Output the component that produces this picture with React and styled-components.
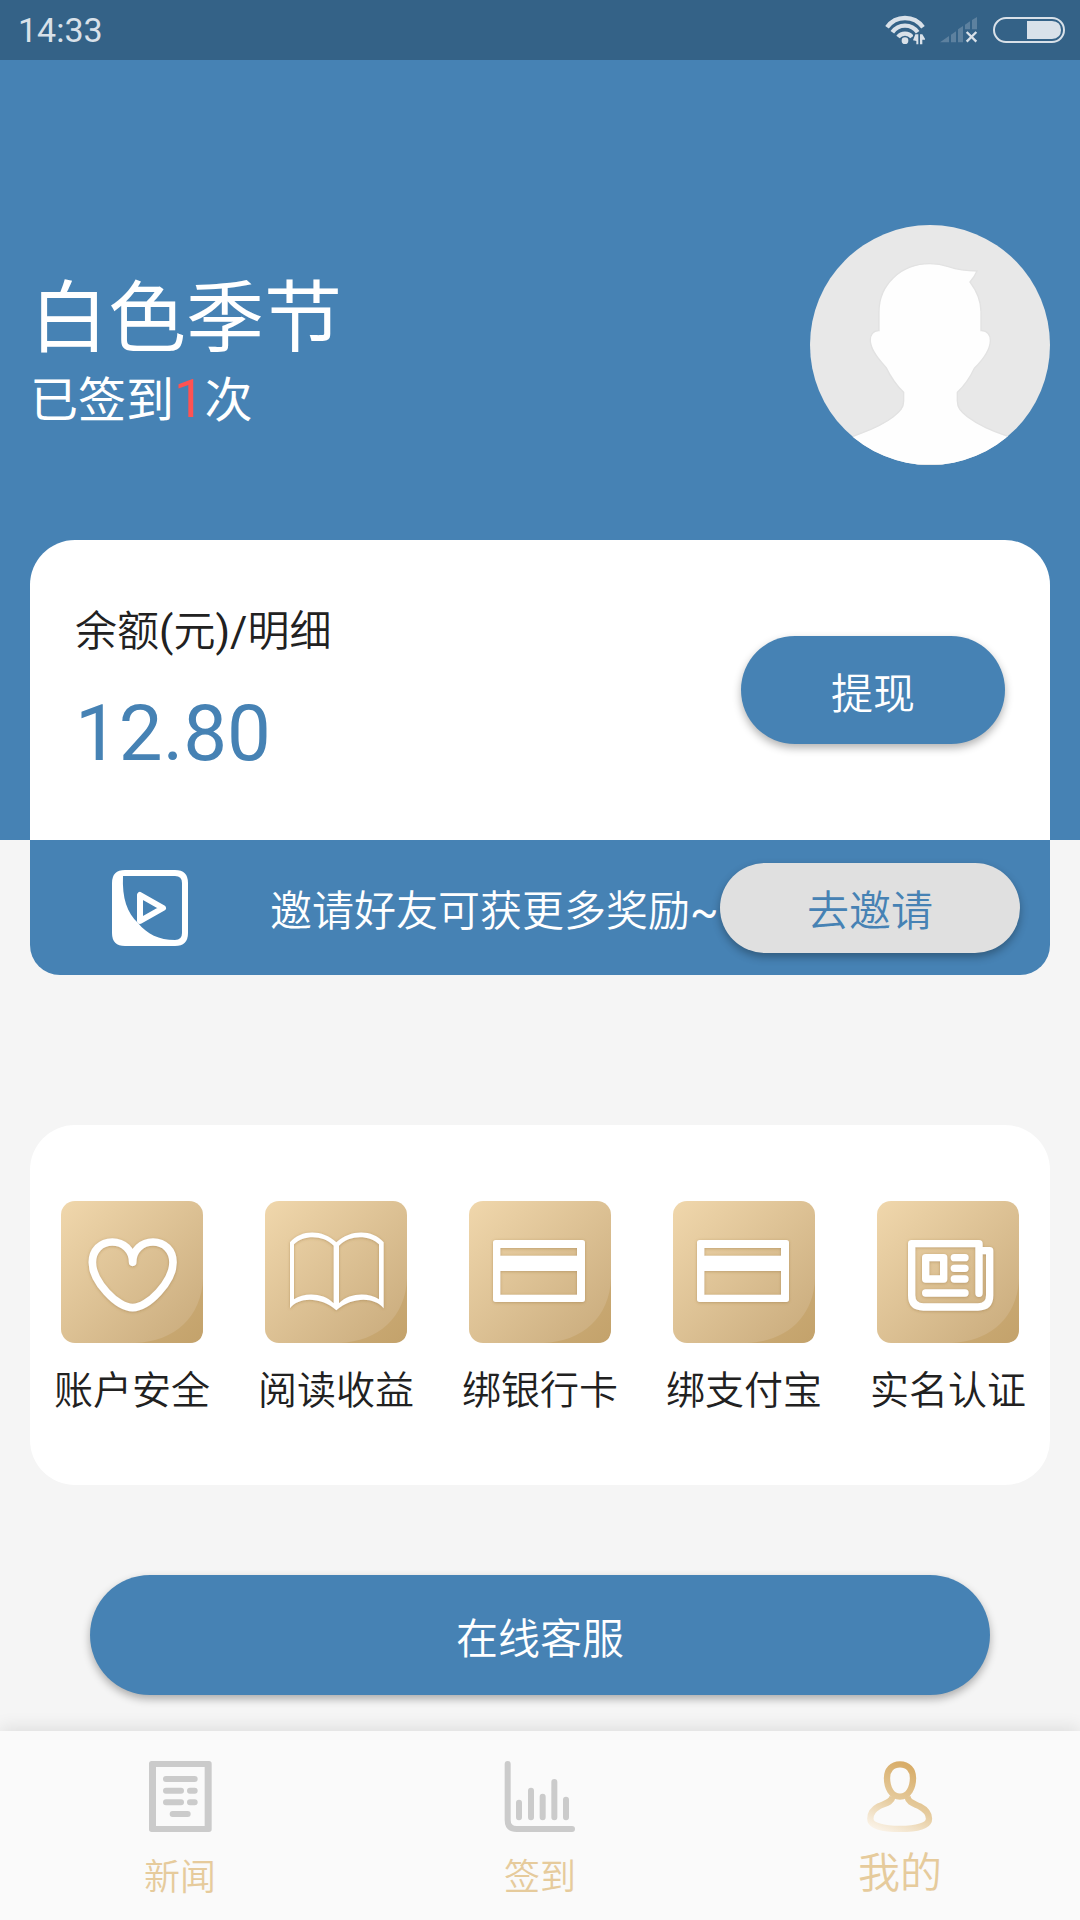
import React from 'react';
import styled, { createGlobalStyle } from 'styled-components';

const blue = '#4682b4';
const gold = '#e6cb9c';

const GlobalStyle = createGlobalStyle`
  *, *::before, *::after { box-sizing: border-box; }
  body {
    margin: 0;
    background: #f5f5f5;
    color: #212121;
    font-family: Roboto, "Noto Sans CJK SC", sans-serif;
    font-weight: 350;
  }
  button { font: inherit; border: 0; cursor: pointer; }
  a { color: inherit; text-decoration: none; }
  svg { display: block; flex: none; }
`;

const Page = styled.div`
  min-height: 100vh;
  display: flex;
  flex-direction: column;
`;

const StatusBar = styled.div`
  height: 60px;
  padding: 0 15px 0 18px;
  display: flex;
  align-items: center;
  justify-content: space-between;
  background: #346287;
  color: #d9e1e9;
  font-size: 34px;
  font-weight: 400;
`;

const StatusIcons = styled.div`
  display: flex;
  align-items: center;
  gap: 15px;
`;

const Hero = styled.header`
  background: ${blue};
`;

const Profile = styled.section`
  display: flex;
  align-items: center;
  justify-content: space-between;
  padding: 165px 30px 75px;
  color: #fff;
`;

const Name = styled.h1`
  margin: 0;
  font-size: 78px;
  line-height: 110px;
  font-weight: 400;
`;

const CheckIns = styled.p`
  margin: 0;
  font-size: 48px;
  line-height: 48px;
  font-weight: 400;
`;

const Count = styled.span`
  color: #ff5252;
  font-size: 54px;
`;

const BalanceCard = styled.section`
  margin: 0 30px;
  padding: 48px 45px;
  display: flex;
  align-items: center;
  justify-content: space-between;
  border-radius: 45px 45px 0 0;
  background: #fff;
`;

const BalanceLink = styled.a`
  display: block;
  font-size: 42px;
  line-height: 88px;
`;

const Latin = styled.span`
  font-weight: 400;
`;

const Amount = styled.div`
  color: ${blue};
  font-size: 78px;
  line-height: 116px;
  font-weight: 400;
`;

const PillButton = styled.button`
  flex: none;
  width: ${(p) => p.$width};
  height: ${(p) => p.$height}px;
  padding: 0;
  border-radius: ${(p) => p.$height / 2}px;
  background: ${(p) => (p.$muted ? '#e0e0e0' : blue)};
  color: ${(p) => (p.$muted ? blue : '#fff')};
  font-size: 42px;
  box-shadow: 0 4px 8px rgba(0, 0, 0, 0.3);
`;

const InviteBanner = styled.section`
  margin: 0 30px;
  height: 135px;
  padding-right: 30px;
  display: flex;
  align-items: center;
  border-radius: 0 0 30px 30px;
  background: ${blue};
  color: #fff;
`;

const BannerIcon = styled.div`
  width: 240px;
  display: flex;
  justify-content: center;
`;

const BannerText = styled.p`
  flex: 1;
  margin: 0;
  font-size: 42px;
  white-space: nowrap;
`;

const Services = styled.nav`
  margin: 150px 30px 90px;
  padding: 75px 0 68px;
  display: grid;
  grid-template-columns: repeat(5, 1fr);
  border-radius: 45px;
  background: #fff;
`;

const Service = styled.a`
  display: flex;
  flex-direction: column;
  align-items: center;
  gap: 21px;
  font-size: 39px;
  line-height: 52px;
`;

const Support = styled.div`
  padding: 0 90px 36px;
`;

const TabBar = styled.nav`
  margin-top: auto;
  height: 189px;
  padding-top: 29px;
  display: grid;
  grid-template-columns: repeat(3, 1fr);
  background: #fafafa;
  box-shadow: 0 -4px 16px rgba(0, 0, 0, 0.09);
`;

const Tab = styled.a`
  display: flex;
  flex-direction: column;
  align-items: center;
  gap: ${(p) => (p.$active ? 12 : 16)}px;
  color: ${gold};
  font-size: ${(p) => (p.$active ? 42 : 36)}px;
  line-height: 60px;
`;

function WifiIcon() {
  return (
    <svg width="40" height="30" viewBox="72 43 120 90" fill="none" stroke="#d9e1e9">
      <path d="M78 80A66 66 0 0 1 186 80" strokeWidth="13" />
      <path d="M94 95A46 46 0 0 1 170 95" strokeWidth="13" />
      <path d="M111 109A27 27 0 0 1 153 109" strokeWidth="13" />
      <circle cx="132" cy="120" r="10" fill="#d9e1e9" stroke="none" />
      <path d="M156 100H192V133H156Z" fill="#346287" stroke="none" />
      <path d="M163 101H172V131H166V121L156 119Z M177 101H184L192 114V117H184V131H177Z" fill="#d9e1e9" stroke="none" />
    </svg>
  );
}

function SignalIcon() {
  return (
    <svg width="38" height="26" viewBox="243 53 114 78">
      <path
        d="M243 129L270 110V129Z M276 106L291 96V129H276Z M297 90L312 80V129H297Z M318 76L333 66V90H318Z M339 62L354 53V90H339Z"
        fill="#5d819f"
      />
      <path d="M323 98L352 127M352 98L323 127" stroke="#d9e1e9" strokeWidth="7" />
    </svg>
  );
}

function BatteryIcon() {
  return (
    <svg width="72" height="26" viewBox="399 51 216 78">
      <rect x="402" y="54" width="210" height="72" rx="36" fill="none" stroke="#d9e1e9" strokeWidth="6" />
      <path d="M501 63H576Q603 65 603 90Q603 115 576 117H501Z" fill="#d9e1e9" />
    </svg>
  );
}

function Avatar() {
  return (
    <svg width="240" height="240" viewBox="0 0 720 720" role="img" aria-label="头像">
      <clipPath id="avatar-clip">
        <circle cx="360" cy="360" r="360" />
      </clipPath>
      <g clipPath="url(#avatar-clip)">
        <path d="M0 0H720V720H0Z" fill="#e8e8e8" />
        <path
          d="M207 317V260C207 180 272 116 360 116C384 116 400 120 415 125C445 135 475 138 501 138Q493 156 480 171Q513 215 513 260V317C532 316 542 330 541 348C540 376 515 408 493 430C480 458 466 480 442 502V528C442 548 452 560 472 575C512 605 550 618 594 634V720H130V634C170 618 212 605 250 575C270 560 281 548 281 528V502C258 480 242 455 228 427C205 402 182 375 181 348C180 330 190 316 207 317Z"
          fill="#fefefe"
          stroke="#e2e2e2"
          strokeWidth="4"
        />
      </g>
    </svg>
  );
}

function PlayIcon() {
  return (
    <svg width="76" height="76" viewBox="0 0 76 76">
      <path
        fillRule="evenodd"
        fill="#fff"
        d="M13 0H63Q76 0 76 13V63Q76 76 63 76H13Q0 76 0 63V13Q0 0 13 0Z M11 6C10 28 15 43 26 53C35 64 47 70 63 70Q70 70 70 63V13Q70 6 63 6Z"
      />
      <path d="M28 25V51L51 38Z" fill="none" stroke="#fff" strokeWidth="6" strokeLinejoin="round" />
    </svg>
  );
}

function GoldTile({ children }) {
  return (
    <svg width="144" height="144" viewBox="0 0 432 432">
      <defs>
        <linearGradient id="tile" x1="0" y1="0" x2="1" y2="1">
          <stop offset="0" stopColor="#f0d7ac" />
          <stop offset="1" stopColor="#c8aa7b" />
        </linearGradient>
        <linearGradient id="fold" x1="0" y1="0" x2="1" y2="1">
          <stop offset="0" stopColor="#d0b07b" />
          <stop offset="1" stopColor="#c3a26b" />
        </linearGradient>
        <filter id="glyph-shadow" x="-20%" y="-20%" width="140%" height="140%">
          <feDropShadow dx="0" dy="2" stdDeviation="4" floodColor="#8f6b34" floodOpacity="0.45" />
        </filter>
      </defs>
      <rect x="3" y="3" width="426" height="426" rx="42" fill="url(#tile)" />
      <path d="M429 235C425 350 345 425 225 429H387Q429 429 429 387Z" fill="url(#fold)" />
      <g filter="url(#glyph-shadow)">{children}</g>
    </svg>
  );
}

const HeartGlyph = () => (
  <path
    d="M218 187C218 150 190 126 157 126C122 126 97 152 97 187C97 245 172 323 218 323C264 323 339 245 339 187C339 152 314 126 279 126C246 126 218 150 218 187Z"
    fill="none"
    stroke="#fff"
    strokeWidth="23"
    strokeLinejoin="round"
  />
);

const BookGlyph = () => (
  <path
    fillRule="evenodd"
    fill="#fff"
    d="M78 127C112 88 175 88 217 127C260 88 325 88 359 127V325C330 290 265 290 217 331C170 290 105 290 78 325Z M90 133C118 104 178 104 209 137V310C178 277 120 277 90 298Z M225 137C256 104 316 104 345 133V298C315 277 256 277 225 310Z"
  />
);

const CardGlyph = () => (
  <path
    fillRule="evenodd"
    fill="#fff"
    d="M83 120H343Q351 120 351 128V298Q351 306 343 306H83Q75 306 75 298V128Q75 120 83 120Z M97 144V167H327V144Z M97 213V284H327V213Z"
  />
);

const NewsGlyph = () => (
  <g fill="none" stroke="#fff" strokeWidth="22" strokeLinecap="round" strokeLinejoin="round">
    <path d="M309 280V131H107V286Q107 321 142 321H306Q341 321 341 286V152H320" />
    <path d="M149 173H203V237H149Z" />
    <path d="M235 173H267M235 205H267M235 237H267M149 279H267" />
  </g>
);

function NewsTabIcon() {
  return (
    <svg width="72" height="72" viewBox="0 0 216 216" fill="none" stroke="#cbcbcb" strokeWidth="18" strokeLinecap="round">
      <path
        d="M23 3H195Q203 3 203 11V208Q203 216 195 216H23Q15 216 15 208V11Q15 3 23 3Z M36 21V198H182V21Z"
        fill="#cbcbcb"
        fillRule="evenodd"
        stroke="none"
      />
      <path d="M66 57H152M66 92H111M138 92H152M66 127H111M138 127H152M86 162H131" />
    </svg>
  );
}

function ChartTabIcon() {
  return (
    <svg width="72" height="72" viewBox="0 0 216 216" fill="none" stroke="#cbcbcb" strokeWidth="18" strokeLinecap="round">
      <path d="M11 12V180Q11 207 38 207H204" />
      <path d="M45 128V172M81 92V172M116 110V172M151 66V172M186 119V172" />
    </svg>
  );
}

function PersonTabIcon() {
  return (
    <svg width="72" height="72" viewBox="0 0 216 216" fill="none" stroke="url(#person)" strokeWidth="19">
      <defs>
        <linearGradient id="person" gradientUnits="userSpaceOnUse" x1="140" y1="20" x2="60" y2="215">
          <stop offset="0" stopColor="#d8ad69" />
          <stop offset="0.55" stopColor="#e6cc9f" />
          <stop offset="1" stopColor="#faf2e6" />
        </linearGradient>
      </defs>
      <path d="M108 13C84 13 69 30 69 54C69 82 82 110 108 110C134 110 147 82 147 54C147 30 132 13 108 13Z" />
      <path d="M86 110C82 128 62 130 44 139C27 148 19 160 19 176C19 198 60 207 108 207C156 207 195 198 195 176C195 160 184 148 167 139C148 130 134 128 130 110" />
    </svg>
  );
}

const services = [
  { label: '账户安全', Glyph: HeartGlyph },
  { label: '阅读收益', Glyph: BookGlyph },
  { label: '绑银行卡', Glyph: CardGlyph },
  { label: '绑支付宝', Glyph: CardGlyph },
  { label: '实名认证', Glyph: NewsGlyph },
];

const tabs = [
  { label: '新闻', Icon: NewsTabIcon },
  { label: '签到', Icon: ChartTabIcon },
  { label: '我的', Icon: PersonTabIcon, active: true },
];

export default function App() {
  return (
    <Page>
      <GlobalStyle />
      <Hero>
        <StatusBar>
          <span>14:33</span>
          <StatusIcons>
            <WifiIcon />
            <SignalIcon />
            <BatteryIcon />
          </StatusIcons>
        </StatusBar>
        <Profile>
          <div>
            <Name>白色季节</Name>
            <CheckIns>
              已签到<Count>1</Count>次
            </CheckIns>
          </div>
          <Avatar />
        </Profile>
        <BalanceCard>
          <div>
            <BalanceLink href="#balance">
              余额<Latin>(</Latin>元<Latin>)/</Latin>明细
            </BalanceLink>
            <Amount>12.80</Amount>
          </div>
          <PillButton type="button" $width="264px" $height={108}>
            提现
          </PillButton>
        </BalanceCard>
      </Hero>
      <InviteBanner>
        <BannerIcon>
          <PlayIcon />
        </BannerIcon>
        <BannerText>
          邀请好友可获更多奖励<Latin>~</Latin>
        </BannerText>
        <PillButton type="button" $width="300px" $height={90} $muted>
          去邀请
        </PillButton>
      </InviteBanner>
      <Services>
        {services.map(({ label, Glyph }) => (
          <Service href="#service" key={label}>
            <GoldTile>
              <Glyph />
            </GoldTile>
            {label}
          </Service>
        ))}
      </Services>
      <Support>
        <PillButton type="button" $width="100%" $height={120}>
          在线客服
        </PillButton>
      </Support>
      <TabBar>
        {tabs.map(({ label, Icon, active }) => (
          <Tab href="#tab" key={label} $active={active} aria-current={active ? 'page' : undefined}>
            <Icon />
            {label}
          </Tab>
        ))}
      </TabBar>
    </Page>
  );
}
